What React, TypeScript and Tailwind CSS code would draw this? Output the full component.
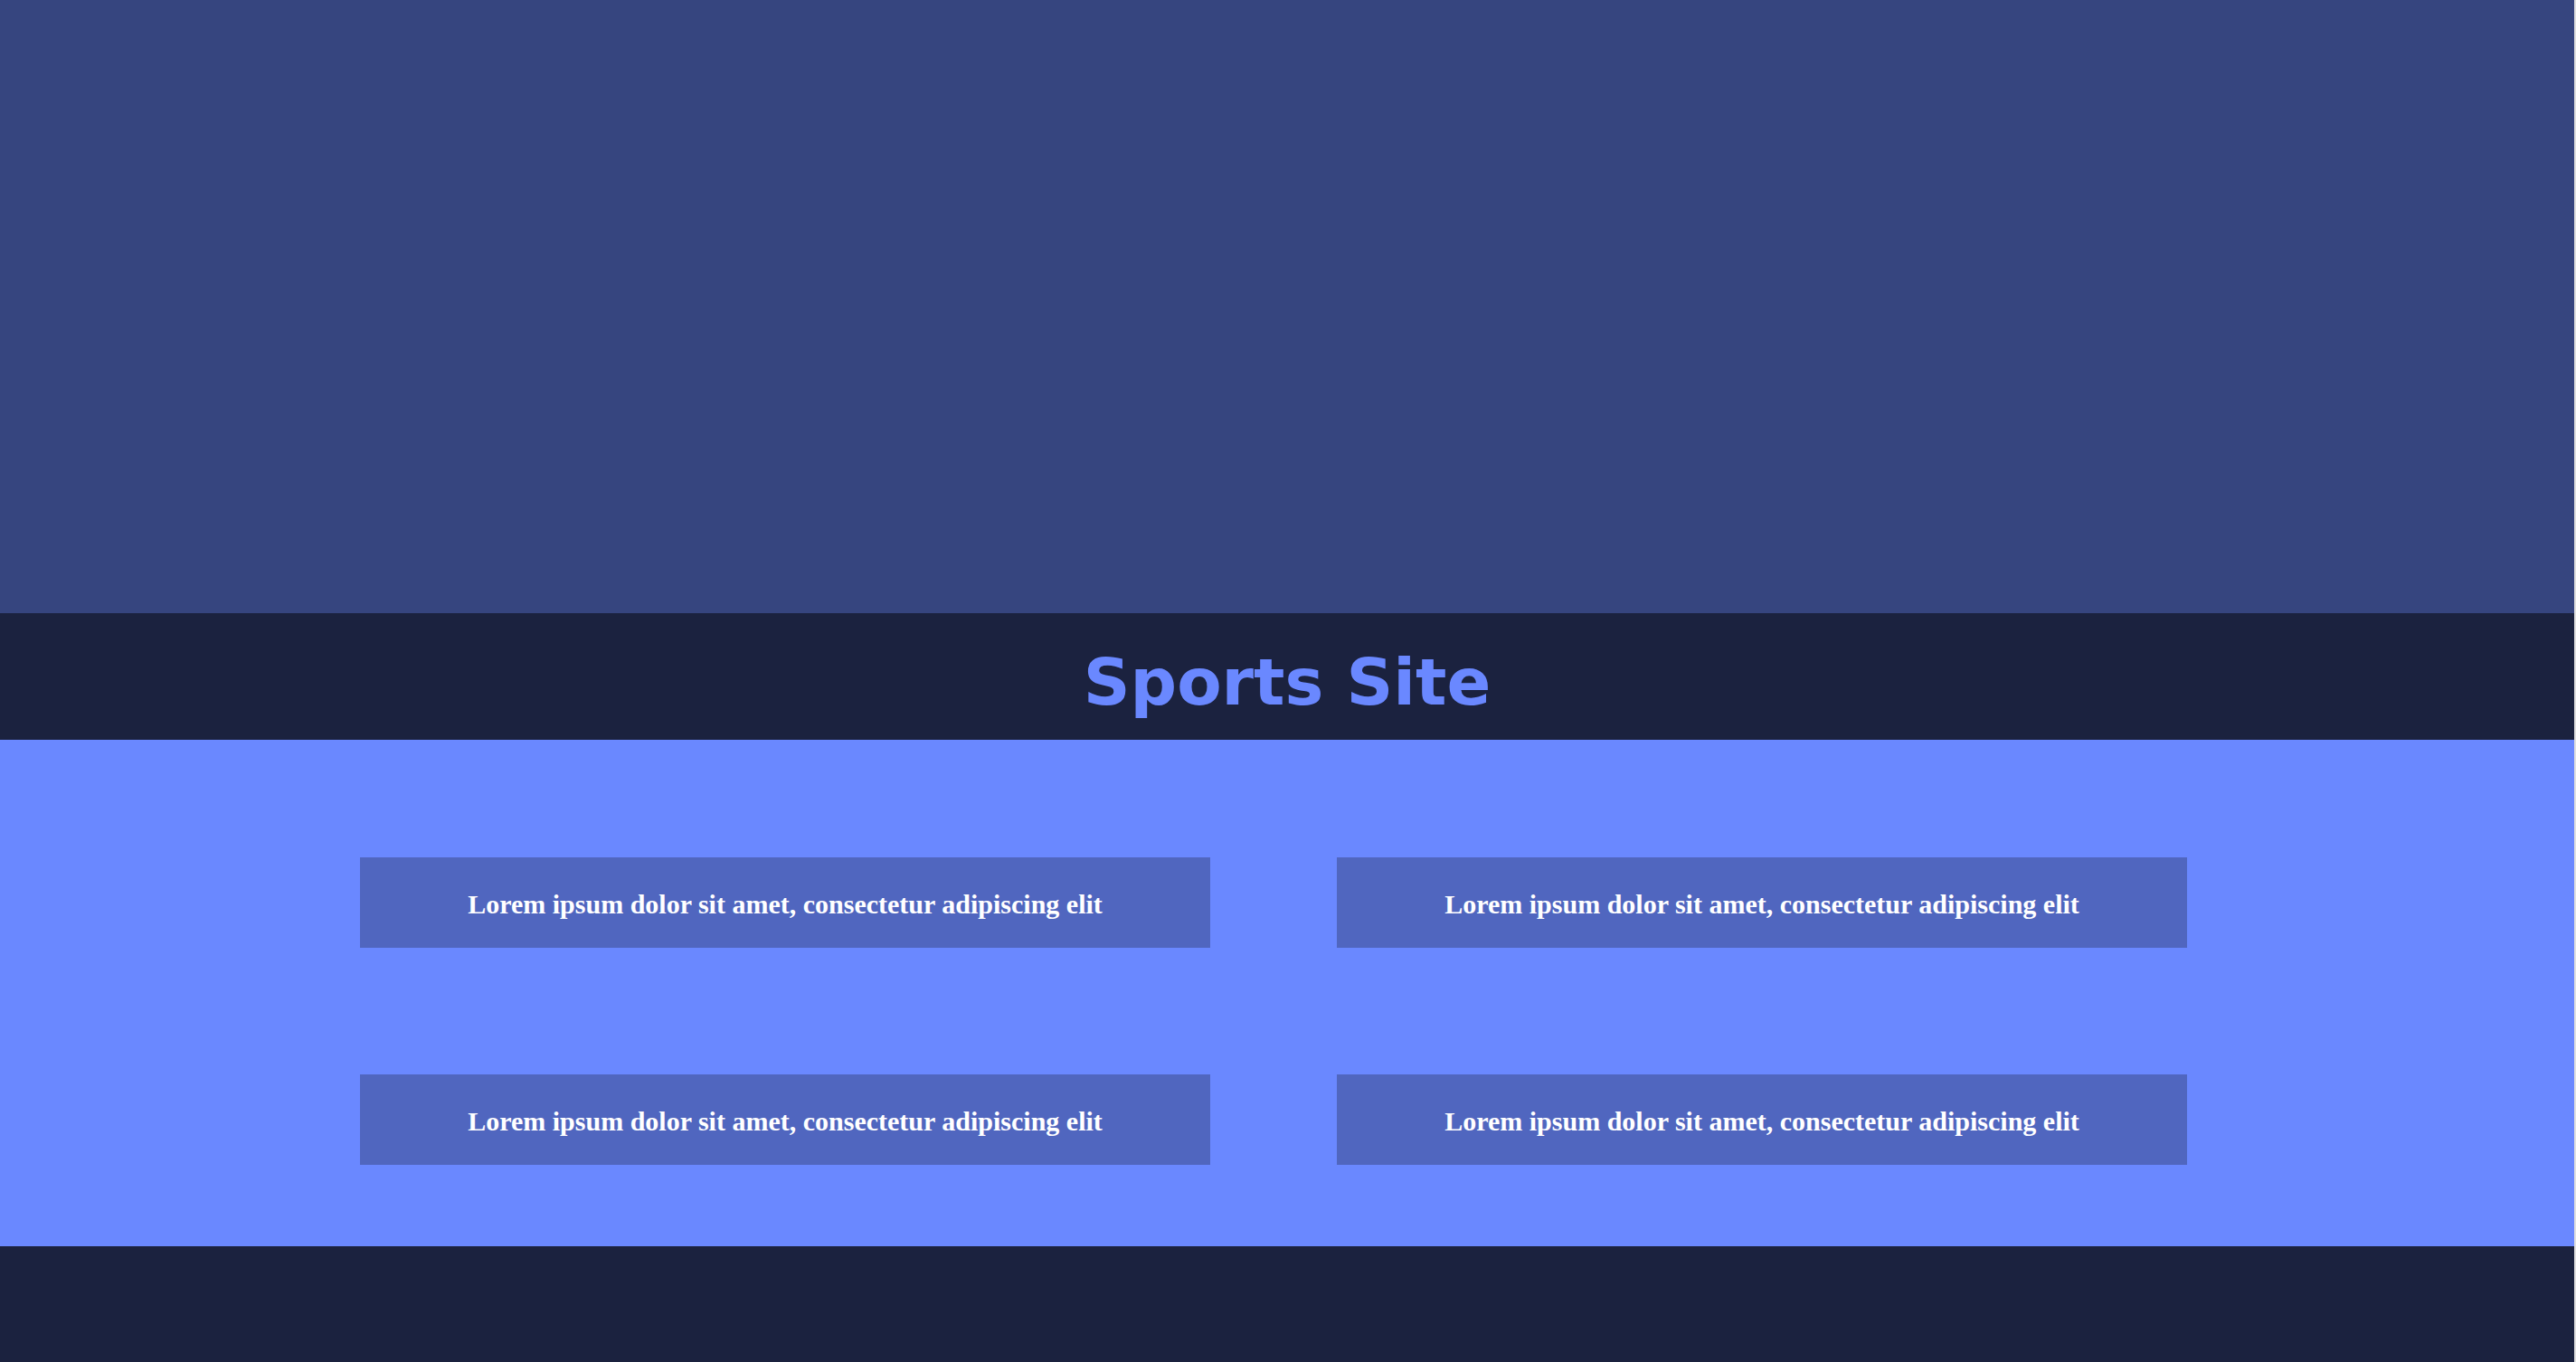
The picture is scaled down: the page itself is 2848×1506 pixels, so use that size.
const posts = [
  { id: 1, title: "Lorem ipsum dolor sit amet, consectetur adipiscing elit" },
  { id: 2, title: "Lorem ipsum dolor sit amet, consectetur adipiscing elit" },
  { id: 3, title: "Lorem ipsum dolor sit amet, consectetur adipiscing elit" },
  { id: 4, title: "Lorem ipsum dolor sit amet, consectetur adipiscing elit" },
];

function PostCard({ title }: { title: string }) {
  return (
    <article className="bg-[#5066bf] px-8 pt-8 pb-7 text-center">
      <h2 className="font-['Liberation_Serif',serif] text-[30px] leading-10 font-bold text-white">
        {title}
      </h2>
    </article>
  );
}

export default function App() {
  return (
    <div className="flex min-h-screen flex-col border-r-2 border-[#e0e0e0] bg-[#1b223f]">
      <section aria-label="Banner" className="h-[45vh] bg-[#36457f]" />
      <header className="px-8 pt-9 pb-6 text-center">
        <h1 className="font-['DejaVu_Sans',sans-serif] text-7xl leading-20 font-bold text-[#6a88ff]">
          Sports Site
        </h1>
      </header>
      <main className="bg-[#6a88ff] pt-[130px] pr-[30px] pb-[90px]">
        <div className="mx-auto grid max-w-[2020px] grid-cols-2 gap-[140px]">
          {posts.map((post) => (
            <PostCard key={post.id} title={post.title} />
          ))}
        </div>
      </main>
      <footer className="flex-1 bg-[#1b223f]" />
    </div>
  );
}
